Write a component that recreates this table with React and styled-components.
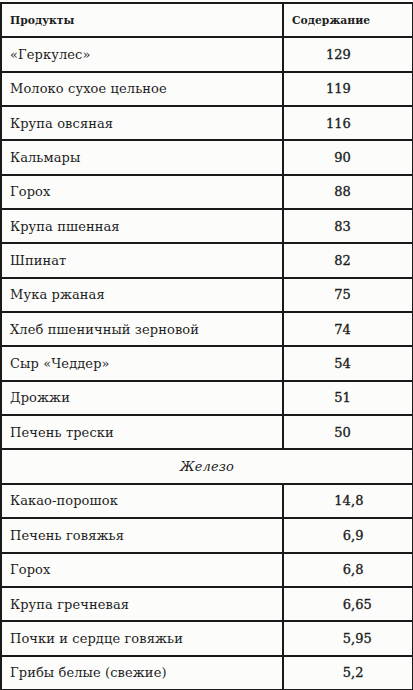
import React from "react";
import styled, { createGlobalStyle } from "styled-components";

const Global = createGlobalStyle`
  html, body { margin: 0; padding: 0; background: #fcfdfb; }
  body { font-family: "DejaVu Serif", "Liberation Serif", serif; color: #1e1e1e; }
`;

const Page = styled.div`
  padding-top: 2px;
  width: 413px;
`;

const Table = styled.table`
  width: 412px;
  table-layout: fixed;
  border-collapse: collapse;
  border: 2px solid #1a1a1a;
`;

const Row = styled.tr`
  height: 34.35px;
`;

const Cell = styled.td`
  border: 2px solid #1a1a1a;
  padding: 0 0 0 8px;
  font-size: 13px;
  letter-spacing: 0.1px;
  white-space: nowrap;
  vertical-align: middle;
`;

const HeadCell = styled(Cell)`
  font-weight: bold;
  font-size: 10.8px;
  letter-spacing: 0;
`;

const SectionCell = styled(Cell)`
  text-align: center;
  font-style: italic;
  padding: 0;
`;

const ValueCell = styled(Cell)`
  padding: 0;
`;

const Value = styled.div`
  display: flex;
  font-weight: normal;
  -webkit-text-stroke: 0.35px #1e1e1e;
`;

const IntPart = styled.span`
  width: 67px;
  text-align: right;
`;

const products1 = [
  ["«Геркулес»", "129"],
  ["Молоко сухое цельное", "119"],
  ["Крупа овсяная", "116"],
  ["Кальмары", "90"],
  ["Горох", "88"],
  ["Крупа пшенная", "83"],
  ["Шпинат", "82"],
  ["Мука ржаная", "75"],
  ["Хлеб пшеничный зерновой", "74"],
  ["Сыр «Чеддер»", "54"],
  ["Дрожжи", "51"],
  ["Печень трески", "50"],
];

const products2 = [
  ["Какао-порошок", "14,8"],
  ["Печень говяжья", "6,9"],
  ["Горох", "6,8"],
  ["Крупа гречневая", "6,65"],
  ["Почки и сердце говяжьи", "5,95"],
  ["Грибы белые (свежие)", "5,2"],
];

function Num({ v }) {
  const [i, f] = v.split(",");
  return (
    <Value>
      <IntPart>{i}</IntPart>
      {f !== undefined && <span>,{f}</span>}
    </Value>
  );
}

function ProductRow({ name, value }) {
  return (
    <Row>
      <Cell>{name}</Cell>
      <ValueCell>
        <Num v={value} />
      </ValueCell>
    </Row>
  );
}

export default function App() {
  return (
    <Page>
      <Global />
      <Table>
        <colgroup>
          <col style={{ width: 282 }} />
          <col style={{ width: 130 }} />
        </colgroup>
        <tbody>
          <Row>
            <HeadCell>Продукты</HeadCell>
            <HeadCell>Содержание</HeadCell>
          </Row>
          {products1.map(([n, v], k) => (
            <ProductRow key={"a" + k} name={n} value={v} />
          ))}
          <Row>
            <SectionCell colSpan={2}>Железо</SectionCell>
          </Row>
          {products2.map(([n, v], k) => (
            <ProductRow key={"b" + k} name={n} value={v} />
          ))}
        </tbody>
      </Table>
    </Page>
  );
}
